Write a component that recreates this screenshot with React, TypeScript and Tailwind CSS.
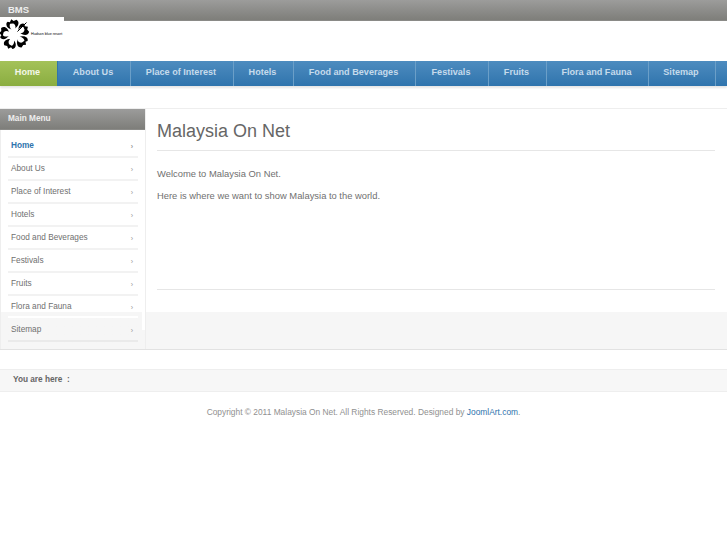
import React from 'react';

const navItems = [
  { label: 'Home', w: 'w-[58px]', active: true },
  { label: 'About Us', w: 'w-[73px]' },
  { label: 'Place of Interest', w: 'w-[103px]' },
  { label: 'Hotels', w: 'w-[60px]' },
  { label: 'Food and Beverages', w: 'w-[122px]' },
  { label: 'Festivals', w: 'w-[73px]' },
  { label: 'Fruits', w: 'w-[58px]' },
  { label: 'Flora and Fauna', w: 'w-[102px]' },
  { label: 'Sitemap', w: 'w-[67px]' },
];

const menuItems = ['Home', 'About Us', 'Place of Interest', 'Hotels', 'Food and Beverages', 'Festivals', 'Fruits', 'Flora and Fauna', 'Sitemap'];

const Flower = () => (
  <svg width="30" height="30" viewBox="0 0 30 30" className="block shrink-0">
    <g transform="translate(14.5 15.5)">
      {[-12, 60, 132, 204, 276].map((r) => (
        <g key={r} transform={`rotate(${r})`}>
          <path d="M0 -5 C-7 -7 -7 -13 -4 -14 L-2 -13 L0 -15.5 L2 -13.5 L5 -14 C8 -11 6 -7 0 -5 Z" fill="#000" />
          <path d="M0 -3 C-3.5 -6 -3.5 -10 -2 -11.5 L1 -11 C3.5 -9 3 -6 0 -3 Z" fill="#fff" />
        </g>
      ))}
      <circle r="5" fill="#fff" />
      <path d="M3 -3 L12 -12" stroke="#000" strokeWidth="1" />
    </g>
  </svg>
);

export default function App() {
  return (
    <div className="min-h-[545px] bg-white font-['Liberation_Sans',Arial,sans-serif] text-[#707070]">
      <div className="h-[21px] border-b border-[#8a8a87] bg-gradient-to-b from-[#9c9c9b] to-[#7e7e7a] pl-2 text-[9.5px] font-bold leading-[19px] text-[#eee]">
        BMS
      </div>

      <div className="relative -mt-1 h-11">
        <div className="flex h-[34px] w-16 items-center bg-white">
          <Flower />
          <span className="ml-px mt-[2px] whitespace-nowrap text-[3.7px] leading-none text-black">Hudson blue resort</span>
        </div>
      </div>

      <nav className="flex h-[25px] bg-gradient-to-b from-[#4d8cbf] to-[#2f74ad] shadow-[0_2px_2px_#e6e6e6]">
        {navItems.map((item) => (
          <a
            key={item.label}
            className={`block h-full shrink-0 border-r border-[#6b9fc8] pr-[2px] text-center text-[9.1px] font-bold leading-[23px] ${item.w} ${
              item.active ? 'border-r-[#2f74ad] bg-gradient-to-b from-[#a4c259] to-[#8aad40] text-[#f4f7e8]' : 'text-[#c6dbec]'
            }`}
          >
            {item.label}
          </a>
        ))}
      </nav>

      <div className="mt-[22px] flex h-[242px] border-y border-t-[#eee] border-b-[#e2e2e2]">
        <aside className="relative w-[146px] shrink-0 border-r border-[#eee]">
          <h3 className="h-[21px] border-b border-[#8a8a87] bg-gradient-to-b from-[#9c9c9b] to-[#7e7e7a] pl-2 text-[8.25px] font-bold leading-[20px] text-[#eee]">
            Main Menu
          </h3>
          <ul className="h-[219px] border-l border-[#eee] bg-gradient-to-b from-white from-[83%] to-[#f6f6f6] to-[83%] px-[7px] pt-[5px]">
            {menuItems.map((item, i) => (
              <li
                key={item}
                className={`flex items-center justify-between border-b-2 pl-[3px] pr-[5px] pt-[2px] text-[8.25px] ${
                  i === 7 ? 'h-[22px] border-white' : i === 8 ? 'h-[24px] border-[#eaeaea]' : 'h-[23px] border-[#f2f2f2]'
                } ${i === 0 ? 'font-bold text-[#2f74ad]' : 'text-[#707070]'}`}
              >
                <span>{item}</span>
                <span className="text-[7px] leading-none text-[#999]">›</span>
              </li>
            ))}
          </ul>
          <div className="absolute bottom-[19px] right-0 h-[18px] w-[3px] bg-white" />
        </aside>

        <main className="flex min-w-0 flex-1 flex-col">
          <div className="h-[203px] pl-[11px] pr-3">
            <h2 className="h-[42px] border-b border-[#e6e6e6] pt-[10px] text-[18px] font-normal leading-[24px] text-[#666]">
              Malaysia On Net
            </h2>
            <div className="h-[139px] border-b border-[#e6e6e6] pt-[17px] text-[9.4px] leading-[11px]">
              <p>Welcome to Malaysia On Net.</p>
              <p className="mt-[11px]">Here is where we want to show Malaysia to the world.</p>
            </div>
          </div>
          <div className="flex-1 bg-[#f6f6f6]" />
        </main>
      </div>

      <div className="mt-[19px] h-[23px] border-y border-[#eee] bg-[#f7f7f7] pl-[13px] text-[8.25px] font-bold leading-[20px] text-[#666]">
        You are here&nbsp;&nbsp;:
      </div>

      <p className="mt-[15px] text-center text-[8.4px] leading-[11px] text-[#909090]">
        Copyright © 2011 Malaysia On Net. All Rights Reserved. Designed by <a className="text-[#2f74ad]">JoomlArt.com</a>.
      </p>
    </div>
  );
}
